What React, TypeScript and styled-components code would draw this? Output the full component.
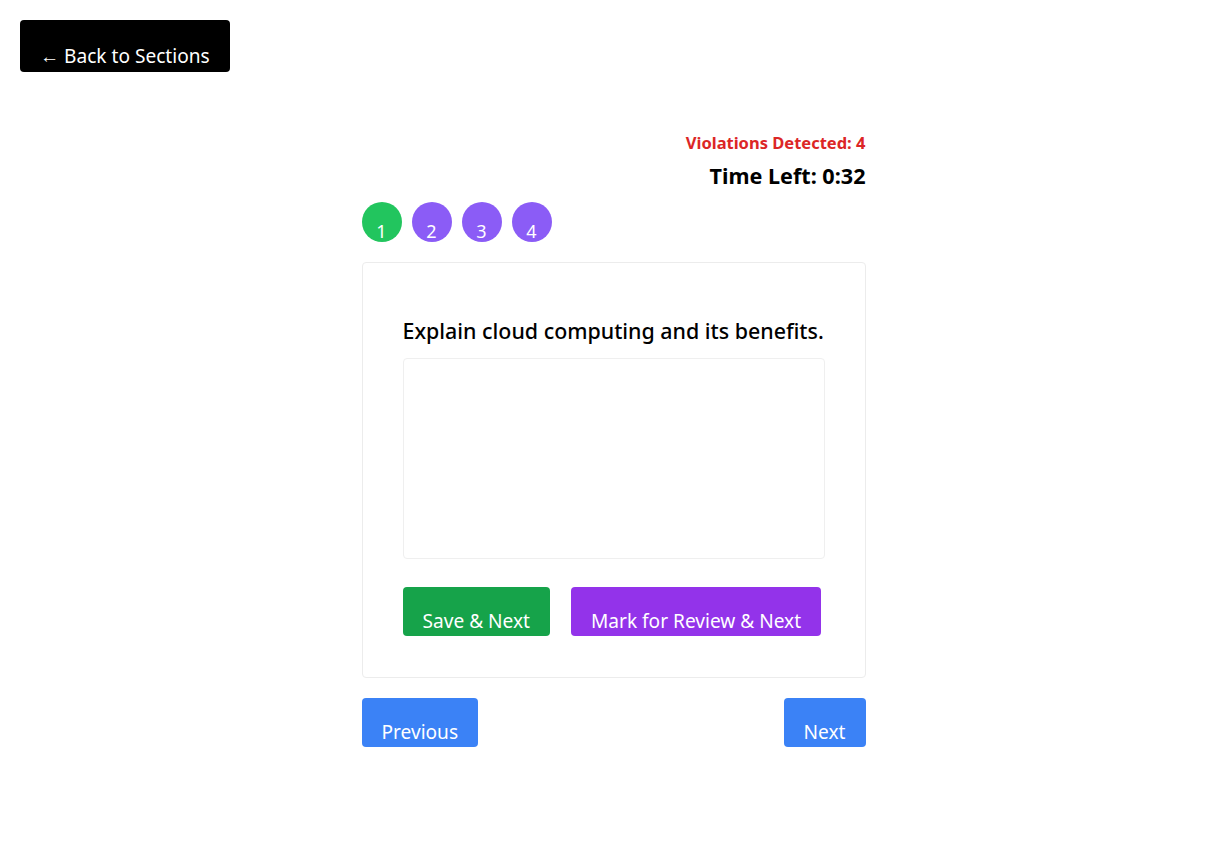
import React from "react";
import styled, { createGlobalStyle } from "styled-components";

const Global = createGlobalStyle`
  html, body { margin: 0; padding: 0; background: #fff; }
  body { font-family: "Noto Sans", "Open Sans", sans-serif; color: #000; }
  * { box-sizing: border-box; }
`;

const Page = styled.div`
  padding: 20px;
  min-height: 868px;
`;

const BaseButton = styled.button`
  font-family: inherit;
  font-size: 19.1px;
  line-height: 24px;
  color: #fff;
  border: none;
  border-radius: 4px;
  padding: 22px 20px 3px;
  height: 49px;
  cursor: pointer;
  white-space: nowrap;
`;

const BackButton = styled(BaseButton)`
  background: #000;
  height: 52px;
  padding: 24px 20px 4px;
`;

const Main = styled.div`
  width: 504px;
  margin: 60px auto 0;
  display: flex;
  flex-direction: column;
`;

const Status = styled.div`
  display: flex;
  flex-direction: column;
  align-items: flex-end;
`;

const Violations = styled.div`
  color: #dc2626;
  font-weight: 700;
  font-size: 16.5px;
  line-height: 22px;
`;

const Timer = styled.div`
  font-weight: 700;
  font-size: 21.6px;
  line-height: 28px;
  margin-top: 8px;
`;

const Palette = styled.div`
  display: flex;
  gap: 10px;
  margin-top: 12px;
`;

const Bubble = styled.div<{ $tone: "done" | "pending" }>`
  width: 40px;
  height: 40px;
  border-radius: 50%;
  background: ${(p) => (p.$tone === "done" ? "#22c55e" : "#8b5cf6")};
  color: #fff;
  font-size: 18px;
  line-height: 19px;
  text-align: center;
  padding-top: 20px;
`;

const Card = styled.div`
  margin-top: 20px;
  border: 1px solid #ececec;
  border-radius: 4px;
  padding: 55px 40px 41px;
`;

const Question = styled.h3`
  margin: 0 0 14px;
  font-size: 21.4px;
  font-weight: 500;
  line-height: 26px;
`;

const Answer = styled.textarea`
  display: block;
  width: 100%;
  height: 201px;
  border: 1px solid #efefef;
  border-radius: 4px;
  resize: none;
  outline: none;
`;

const Actions = styled.div`
  display: flex;
  gap: 21px;
  margin-top: 28px;
`;

const ActionButton = styled(BaseButton)<{ $variant: "save" | "review" | "nav" }>`
  background: ${(p) =>
    p.$variant === "save" ? "#16a34a" : p.$variant === "review" ? "#9333ea" : "#3b82f6"};
`;

const Nav = styled.div`
  display: flex;
  justify-content: space-between;
  margin-top: 20px;
`;

export default function App() {
  return (
    <>
      <Global />
      <Page>
        <BackButton>← Back to Sections</BackButton>
        <Main>
          <Status>
            <Violations>Violations Detected: 4</Violations>
            <Timer>Time Left: 0:32</Timer>
          </Status>
          <Palette>
            <Bubble $tone="done">1</Bubble>
            <Bubble $tone="pending">2</Bubble>
            <Bubble $tone="pending">3</Bubble>
            <Bubble $tone="pending">4</Bubble>
          </Palette>
          <Card>
            <Question>Explain cloud computing and its benefits.</Question>
            <Answer />
            <Actions>
              <ActionButton $variant="save">Save &amp; Next</ActionButton>
              <ActionButton $variant="review">Mark for Review &amp; Next</ActionButton>
            </Actions>
          </Card>
          <Nav>
            <ActionButton $variant="nav">Previous</ActionButton>
            <ActionButton $variant="nav">Next</ActionButton>
          </Nav>
        </Main>
      </Page>
    </>
  );
}
